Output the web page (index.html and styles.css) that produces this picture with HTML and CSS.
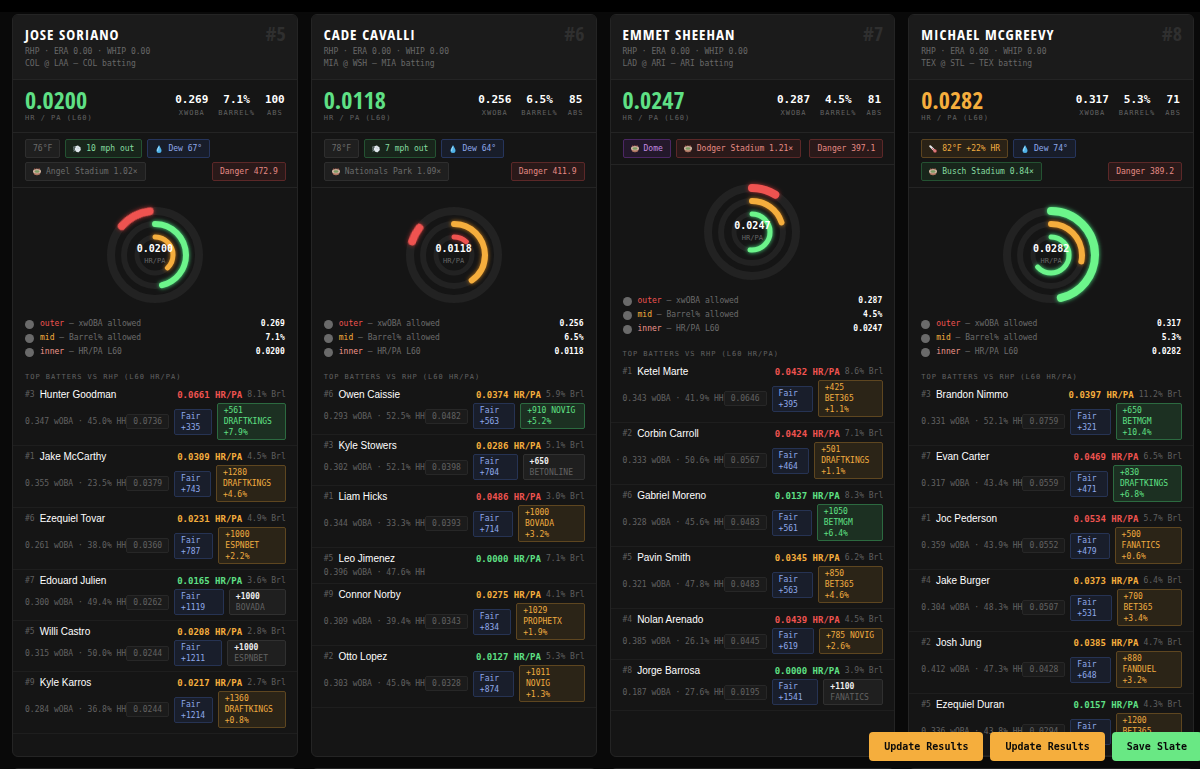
FILE: index.html
```
<!DOCTYPE html>
<html lang="en">
<head>
  <meta charset="UTF-8">
  <meta name="viewport" content="width=device-width, initial-scale=1.0">
  <title>HR Pitcher Board</title>
  <link rel="stylesheet" href="styles.css">
</head>
<body>
  <svg class="sprite" aria-hidden="true">
    <symbol id="i-wind" viewBox="0 0 16 16">
      <path d="M0 4.500 5 3.600M0 8h4M1.500 12l3.500-1.500" stroke="#b9c8d4" stroke-width="1.400" stroke-linecap="round"/>
      <path d="M8 1.500a3 3 0 0 1 4 1.400 3 3 0 0 1 3 4 3.200 3.200 0 0 1-1.800 5A3 3 0 0 1 8.500 14 3.200 3.200 0 0 1 5 10.500a3 3 0 0 1 0-5 3 3 0 0 1 3-4z" fill="#dfe7ec"/>
      <path d="M8 6.500a2 2 0 0 1 3.500 1.500" fill="none" stroke="#a9bac7" stroke-width="1"/>
    </symbol>
    <symbol id="i-drop" viewBox="0 0 16 16">
      <path d="M8 0C6 4.500 3 7.500 3 11a5 5 0 0 0 10 0C13 7.500 10 4.500 8 0z" fill="#4fb3ea"/>
      <path d="M7.500 4C6.500 6.500 5.200 8.500 5.200 11" fill="none" stroke="#c9ecff" stroke-width="1.500" stroke-linecap="round"/>
    </symbol>
    <symbol id="i-park" viewBox="0 0 16 16">
      <path d="M0 6.500 2 12.500Q8 16.500 14 12.500L16 6.500z" fill="#b98068"/>
      <path d="M4 9.500v4M8 10.500v4M12 9.500v4" stroke="#8a5548" stroke-width="1"/>
      <ellipse cx="8" cy="6.500" rx="8" ry="4.500" fill="#cfb4a2"/>
      <ellipse cx="8" cy="7" rx="5" ry="2.400" fill="#7d9a63"/>
      <path d="M3 3.500V1M6.500 2.500V.5M10 2.500V.5M13 3.500V1" stroke="#c96a58" stroke-width="1.400"/>
    </symbol>
    <symbol id="i-temp" viewBox="0 0 16 16">
      <path d="M2.500 2.500 11 11" stroke="#e8e8ea" stroke-width="4" stroke-linecap="round"/>
      <path d="M6 6l5 5" stroke="#d9424a" stroke-width="1.600"/>
      <circle cx="12" cy="12" r="3.600" fill="#c9565c"/>
      <circle cx="12" cy="12" r="1.600" fill="#f0a4a0"/>
    </symbol>
  </svg>

  <div class="topbar"></div>
  <main class="board" id="board"></main>

  <div class="actions">
    <button type="button" class="btn">Update Results</button>
    <button type="button" class="btn">Update Results</button>
    <button type="button" class="btn btn-save">Save Slate</button>
  </div>

  <script src="app.js"></script>
</body>
</html>
```
FILE: styles.css
```
* {
  box-sizing: border-box;
}
body {
  margin: 0;
  height: 100vh;
  overflow: hidden;
  background: #090909;
  color: #f2f2f2;
  font-family: "DejaVu Sans Mono", "Liberation Mono", monospace;
  font-size: 8px;
  line-height: 12px;
}
.sprite {
  display: none;
}
.topbar {
  height: 12px;
  background: #000;
}
.board {
  display: grid;
  grid-template-columns: repeat(4, minmax(0, 1fr));
  gap: 11px 13px;
  padding: 2px 6px 0 12px;
}
.card {
  min-height: 200px;
  background: #151515;
  border: 1px solid #242424;
  border-radius: 6px;
  overflow: hidden;
}

/* header */
.card-head {
  display: flex;
  justify-content: space-between;
  padding: 9px 11px 9px 12px;
  background: #1b1b1b;
  border-bottom: 1px solid #242424;
}
.name {
  margin: 0 0 2px;
  font-family: "Open Sans Condensed", "Roboto Condensed", "Liberation Sans Narrow", sans-serif;
  font-size: 15px;
  line-height: 20px;
  font-weight: 700;
  letter-spacing: 1px;
  text-transform: uppercase;
  color: #fff;
}
.meta {
  margin: 0;
  color: #686868;
}
.rank {
  font-family: "Open Sans Condensed", "Roboto Condensed", "Liberation Sans Narrow", sans-serif;
  font-size: 20px;
  line-height: 20px;
  font-weight: 700;
  color: #2f2f2f;
}

/* stats */
.stats {
  display: flex;
  justify-content: space-between;
  align-items: center;
  padding: 8px 12px;
  border-bottom: 1px solid #242424;
}
.big {
  font-family: "Open Sans Condensed", "Roboto Condensed", "Liberation Sans Narrow", sans-serif;
  font-size: 24px;
  line-height: 24px;
  font-weight: 700;
}
.label {
  font-size: 7px;
  letter-spacing: 1px;
  color: #626262;
}
.stat-list {
  display: flex;
  gap: 10px;
  text-align: center;
}
.stat-value {
  font-size: 11px;
  line-height: 14px;
  font-weight: 700;
  color: #fff;
}

/* chips */
.chips {
  display: flex;
  flex-wrap: wrap;
  gap: 4px 5px;
  padding: 6px 11px 6px 12px;
  border-bottom: 1px solid #242424;
}
.chip {
  display: flex;
  align-items: center;
  gap: 5px;
  height: 19px;
  padding: 0 7px;
  border: 1px solid #2e2e2e;
  border-radius: 2px;
  background: #1f1f1f;
  color: #6b6b6b;
  white-space: nowrap;
}
.chip svg {
  width: 8px;
  height: 8px;
}
.chip.green {
  background: #18251b;
  border-color: #245232;
  color: #86dca0;
}
.chip.blue {
  background: #181d2a;
  border-color: #26355c;
  color: #8ea9ea;
}
.chip.red {
  background: #2a1919;
  border-color: #5c2828;
  color: #e58b85;
}
.chip.amber {
  background: #2a2216;
  border-color: #5c4420;
  color: #f0ac40;
}
.chip.purple {
  background: #23182b;
  border-color: #4c2764;
  color: #c48ae0;
}
.chip.danger {
  margin-left: auto;
}

/* rings */
.rings {
  position: relative;
  width: 110px;
  margin: 12px auto 7px;
}
.rings svg {
  display: block;
  width: 110px;
  height: 110px;
}
.rings circle {
  fill: none;
  stroke-linecap: round;
}
.rings .track {
  stroke: #222;
}
.rings .outer {
  stroke-width: 8;
}
.rings .mid {
  stroke-width: 6;
}
.rings .inner {
  stroke-width: 5;
}
.rings .arc.green {
  stroke: #6cf58b;
  filter: drop-shadow(0 0 2px #4ade80);
}
.rings .arc.amber {
  stroke: #f5ae3d;
  filter: drop-shadow(0 0 2px #c27a1c);
}
.rings .arc.red {
  stroke: #ef5350;
  filter: drop-shadow(0 0 2px #b03030);
}
.ring-text {
  position: absolute;
  inset: 0;
  display: flex;
  flex-direction: column;
  align-items: center;
  justify-content: center;
  font-size: 7px;
  color: #666;
}
.ring-text strong {
  font-size: 10px;
  color: #fff;
}

/* legend */
.legend {
  margin: 0 12px;
  padding: 0;
  list-style: none;
}
.legend li {
  display: flex;
  align-items: center;
  gap: 6px;
  line-height: 14px;
  color: #6b6b6b;
}
.legend li::before {
  content: "";
  width: 9px;
  height: 9px;
  border-radius: 50%;
  background: #6a6a6a;
}
.legend strong {
  margin-left: auto;
  color: #fff;
}
.key-outer {
  color: #ef5350;
}
.key-mid {
  color: #f5ae3d;
}
.key-inner {
  color: #f0958c;
}

/* batters */
.batters-title {
  margin: 12px 12px 1px;
  font-size: 7px;
  font-weight: 400;
  letter-spacing: 1px;
  color: #626262;
}
.batter {
  padding: 5px 11px 5px 12px;
  border-bottom: 1px solid #1e1e1e;
}
.batter-top {
  display: flex;
  align-items: center;
  gap: 5px;
  height: 12px;
  margin-bottom: 2px;
  color: #5f5f5f;
  white-space: nowrap;
}
.batter-name {
  flex: 1;
  font-family: "Liberation Sans", Arial, sans-serif;
  font-size: 10px;
  color: #fff;
}
.hrpa {
  font-size: 9px;
  font-weight: 700;
}
.batter-odds {
  display: flex;
  align-items: center;
  line-height: 11px;
  color: #626262;
}
.splits {
  white-space: nowrap;
}
.odds {
  flex: 1;
  display: flex;
  align-items: center;
  gap: 5px;
}
.tag {
  padding: 1px 6px;
  border: 1px solid #303030;
  border-radius: 2px;
  background: #1f1f1f;
}
.tag b {
  color: #eee;
}
.tag.proj {
  border-color: #272727;
  background: #1b1b1b;
}
.tag.fair {
  background: #191e2b;
  border-color: #263353;
  color: #8ea9ea;
}
.tag.green {
  background: #1c3022;
  border-color: #2c6a40;
  color: #5fe085;
}
.tag.amber {
  background: #2b2417;
  border-color: #5e4620;
  color: #f0ac40;
}

.text-green {
  color: #5fe085;
}
.text-amber {
  color: #f5ae3d;
}
.text-red {
  color: #ef5350;
}

/* floating buttons */
.actions {
  position: fixed;
  right: -2px;
  bottom: 8px;
  display: flex;
  gap: 7px;
}
.btn {
  height: 29px;
  padding: 0 15px;
  border: 0;
  border-radius: 4px;
  background: #f5ae3d;
  color: #0a0a0a;
  font-family: inherit;
  font-size: 10px;
  font-weight: 700;
  white-space: nowrap;
  cursor: pointer;
}
.btn-save {
  background: #69e884;
}
```
FILE: app.js
```
// rings: [start angle, sweep, color] for outer, mid, inner
// batters: [spot, name, hr/pa, color, brl, wOBA, HH, proj, fair, odds, book, edge, odds color]
const pitchers = [
  {
    name: "Jose Soriano", rank: 5, game: "COL @ LAA — COL batting",
    hrpa: "0.0200", color: "green", xwoba: "0.269", barrel: "7.1%", abs: 100,
    chips: [["", "", "76°F"], ["green", "wind", "10 mph out"], ["blue", "drop", "Dew 67°"], ["", "park", "Angel Stadium 1.02×"]],
    danger: "472.9",
    rings: [[-49, 42, "red"], [0, 167, "green"], [0, 136, "amber"]],
    batters: [
      [3, "Hunter Goodman", "0.0661", "red", "8.1", "0.347", "45.0", "0.0736", "+335", "+561", "DRAFTKINGS", "+7.9%", "green"],
      [1, "Jake McCarthy", "0.0309", "amber", "4.5", "0.355", "23.5", "0.0379", "+743", "+1280", "DRAFTKINGS", "+4.6%", "amber"],
      [6, "Ezequiel Tovar", "0.0231", "amber", "4.9", "0.261", "38.0", "0.0360", "+787", "+1000", "ESPNBET", "+2.2%", "amber"],
      [7, "Edouard Julien", "0.0165", "green", "3.6", "0.300", "49.4", "0.0262", "+1119", "+1000", "BOVADA"],
      [5, "Willi Castro", "0.0208", "amber", "2.8", "0.315", "50.0", "0.0244", "+1211", "+1000", "ESPNBET"],
      [9, "Kyle Karros", "0.0217", "amber", "2.7", "0.284", "36.8", "0.0244", "+1214", "+1360", "DRAFTKINGS", "+0.8%", "amber"]
    ]
  },
  {
    name: "Cade Cavalli", rank: 6, game: "MIA @ WSH — MIA batting",
    hrpa: "0.0118", color: "green", xwoba: "0.256", barrel: "6.5%", abs: 85,
    chips: [["", "", "78°F"], ["green", "wind", "7 mph out"], ["blue", "drop", "Dew 64°"], ["", "park", "Nationals Park 1.09×"]],
    danger: "411.9",
    rings: [[-72, 20, "red"], [0, 145, "amber"], [0, 43, "red"]],
    batters: [
      [6, "Owen Caissie", "0.0374", "amber", "5.9", "0.293", "52.5", "0.0482", "+563", "+910", "NOVIG", "+5.2%", "green"],
      [3, "Kyle Stowers", "0.0286", "amber", "5.1", "0.302", "52.1", "0.0398", "+704", "+650", "BETONLINE"],
      [1, "Liam Hicks", "0.0486", "red", "3.0", "0.344", "33.3", "0.0393", "+714", "+1000", "BOVADA", "+3.2%", "amber"],
      [5, "Leo Jimenez", "0.0000", "green", "7.1", "0.396", "47.6"],
      [9, "Connor Norby", "0.0275", "amber", "4.1", "0.309", "39.4", "0.0343", "+834", "+1029", "PROPHETX", "+1.9%", "amber"],
      [2, "Otto Lopez", "0.0127", "green", "5.3", "0.303", "45.0", "0.0328", "+874", "+1011", "NOVIG", "+1.3%", "amber"]
    ]
  },
  {
    name: "Emmet Sheehan", rank: 7, game: "LAD @ ARI — ARI batting",
    hrpa: "0.0247", color: "green", xwoba: "0.287", barrel: "4.5%", abs: 81,
    chips: [["purple", "park", "Dome"], ["red", "park", "Dodger Stadium 1.21×"]],
    danger: "397.1",
    rings: [[0, 32, "red"], [0, 72, "amber"], [0, 187, "green"]],
    batters: [
      [1, "Ketel Marte", "0.0432", "red", "8.6", "0.343", "41.9", "0.0646", "+395", "+425", "BET365", "+1.1%", "amber"],
      [2, "Corbin Carroll", "0.0424", "red", "7.1", "0.333", "50.6", "0.0567", "+464", "+501", "DRAFTKINGS", "+1.1%", "amber"],
      [6, "Gabriel Moreno", "0.0137", "green", "8.3", "0.328", "45.6", "0.0483", "+561", "+1050", "BETMGM", "+6.4%", "green"],
      [5, "Pavin Smith", "0.0345", "amber", "6.2", "0.321", "47.8", "0.0483", "+563", "+850", "BET365", "+4.6%", "amber"],
      [4, "Nolan Arenado", "0.0439", "red", "4.5", "0.385", "26.1", "0.0445", "+619", "+785", "NOVIG", "+2.6%", "amber"],
      [8, "Jorge Barrosa", "0.0000", "green", "3.9", "0.187", "27.6", "0.0195", "+1541", "+1100", "FANATICS"]
    ]
  },
  {
    name: "Michael McGreevy", rank: 8, game: "TEX @ STL — TEX batting",
    hrpa: "0.0282", color: "amber", xwoba: "0.317", barrel: "5.3%", abs: 71,
    chips: [["amber", "temp", "82°F +22% HR"], ["blue", "drop", "Dew 74°"], ["green", "park", "Busch Stadium 0.84×"]],
    danger: "389.2",
    rings: [[0, 167, "green"], [0, 102, "amber"], [0, 228, "green"]],
    batters: [
      [3, "Brandon Nimmo", "0.0397", "amber", "11.2", "0.331", "52.1", "0.0759", "+321", "+650", "BETMGM", "+10.4%", "green"],
      [7, "Evan Carter", "0.0469", "red", "6.5", "0.317", "43.4", "0.0559", "+471", "+830", "DRAFTKINGS", "+6.8%", "green"],
      [1, "Joc Pederson", "0.0534", "red", "5.7", "0.359", "43.9", "0.0552", "+479", "+500", "FANATICS", "+0.6%", "amber"],
      [4, "Jake Burger", "0.0373", "amber", "6.4", "0.304", "48.3", "0.0507", "+531", "+700", "BET365", "+3.4%", "amber"],
      [2, "Josh Jung", "0.0385", "amber", "4.7", "0.412", "47.3", "0.0428", "+648", "+880", "FANDUEL", "+3.2%", "amber"],
      [5, "Ezequiel Duran", "0.0157", "green", "4.3", "0.336", "43.8", "0.0294", "+742", "+1200", "BET365", "+0.7%", "amber"]
    ]
  }
];

function chip([color, icon, text]) {
  const svg = icon ? `<svg aria-hidden="true"><use href="#i-${icon}"/></svg>` : "";
  return `<span class="chip ${color}">${svg}<span>${text}</span></span>`;
}

function ring([start, sweep, color], i) {
  const cls = ["outer", "mid", "inner"][i];
  const r = [44, 31, 18][i];
  return `<circle class="track ${cls}" cx="55" cy="55" r="${r}"/>
    <circle class="arc ${cls} ${color}" cx="55" cy="55" r="${r}" pathLength="360"
      stroke-dasharray="${sweep} 360" transform="rotate(${start - 90} 55 55)"/>`;
}

function batter([spot, name, hrpa, color, brl, woba, hh, proj, fair, odds, book, edge, oddsColor]) {
  let tags = "";
  if (proj) {
    const line = edge ? `${odds} ${book} ${edge}` : `<b>${odds}</b> ${book}`;
    tags = `<div class="odds">
      <span class="tag proj">${proj}</span>
      <span class="tag fair">Fair ${fair}</span>
      <span class="tag ${oddsColor || ""}">${line}</span>
    </div>`;
  }
  return `<div class="batter">
    <div class="batter-top">
      <span>#${spot}</span>
      <span class="batter-name">${name}</span>
      <span class="hrpa text-${color}">${hrpa} HR/PA</span>
      <span>${brl}% Brl</span>
    </div>
    <div class="batter-odds"><span class="splits">${woba} wOBA · ${hh}% HH</span>${tags}</div>
  </div>`;
}

function card(p) {
  return `<article class="card">
    <header class="card-head">
      <div>
        <h2 class="name">${p.name}</h2>
        <p class="meta">RHP · ERA 0.00 · WHIP 0.00<br>${p.game}</p>
      </div>
      <span class="rank">#${p.rank}</span>
    </header>
    <div class="stats">
      <div>
        <div class="big text-${p.color}">${p.hrpa}</div>
        <div class="label">HR / PA (L60)</div>
      </div>
      <div class="stat-list">
        <div><div class="stat-value">${p.xwoba}</div><div class="label">XWOBA</div></div>
        <div><div class="stat-value">${p.barrel}</div><div class="label">BARREL%</div></div>
        <div><div class="stat-value">${p.abs}</div><div class="label">ABS</div></div>
      </div>
    </div>
    <div class="chips">${p.chips.map(chip).join("")}<span class="chip red danger">Danger ${p.danger}</span></div>
    <div class="rings">
      <svg viewBox="0 0 110 110" aria-hidden="true">${p.rings.map(ring).join("")}</svg>
      <div class="ring-text"><strong>${p.hrpa}</strong><span>HR/PA</span></div>
    </div>
    <ul class="legend">
      <li><span><span class="key-outer">outer</span> — xwOBA allowed</span><strong>${p.xwoba}</strong></li>
      <li><span><span class="key-mid">mid</span> — Barrel% allowed</span><strong>${p.barrel}</strong></li>
      <li><span><span class="key-inner">inner</span> — HR/PA L60</span><strong>${p.hrpa}</strong></li>
    </ul>
    <h3 class="batters-title">TOP BATTERS VS RHP (L60 HR/PA)</h3>
    ${p.batters.map(batter).join("")}
  </article>`;
}

const emptyCard = `<article class="card"></article>`;
document.getElementById("board").innerHTML = pitchers.map(card).join("") + emptyCard.repeat(4);
```
